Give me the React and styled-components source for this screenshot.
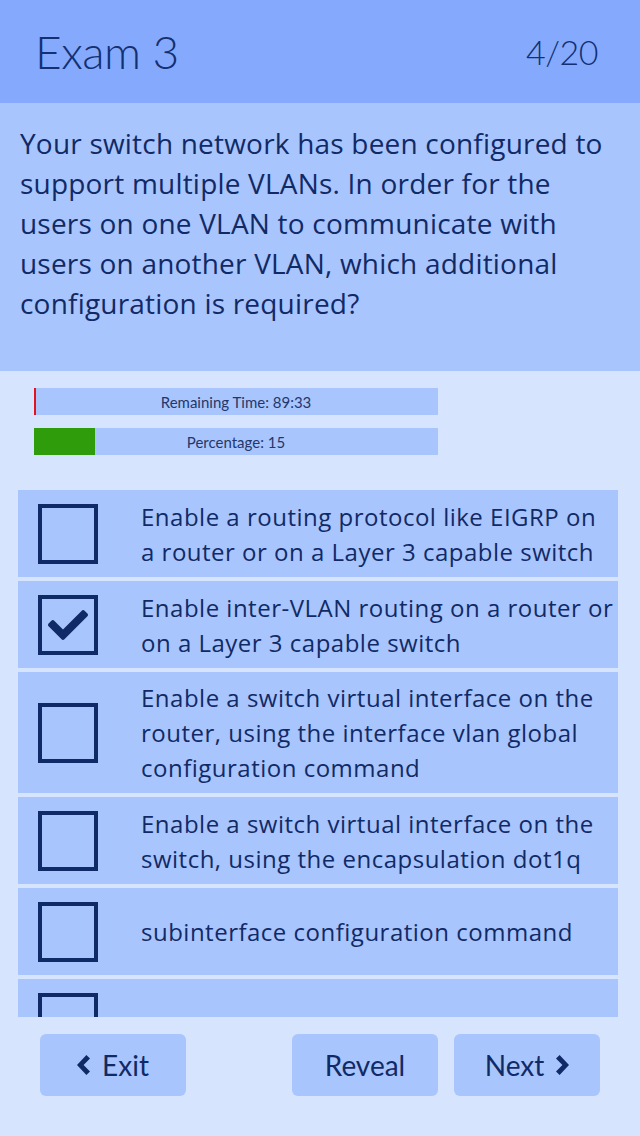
import React from "react"
import styled, { createGlobalStyle } from "styled-components"
import { FaCheck } from "react-icons/fa"

const GlobalStyle = createGlobalStyle`
  html, body {
    margin: 0;
    padding: 0;
    background: #d6e4fd;
  }
  body {
    font-family: "Lato", "Noto Sans", sans-serif;
    color: #112a66;
  }
`

const Screen = styled.div`
  width: 640px;
  height: 1136px;
  display: flex;
  flex-direction: column;
  background: #d6e4fd;
  overflow: hidden;
`

const Header = styled.header`
  height: 103px;
  background: #85aafd;
  display: flex;
  align-items: center;
  justify-content: space-between;
  padding: 0 42px 0 35px;
  box-sizing: border-box;
`

const Title = styled.h1`
  margin: 0;
  font-weight: 300;
  font-size: ${p => p.size}px;
  color: #133073;
  letter-spacing: -0.5px;
`

const Question = styled.section`
  height: 268px;
  background: #a9c5fd;
  padding: 20px 20px 0 20px;
  box-sizing: border-box;
  font-family: "Open Sans", "Noto Sans", sans-serif;
  font-size: 28px;
  line-height: 40px;
  color: #112a66;
  letter-spacing: 0.2px;
`

const Bars = styled.div`
  display: flex;
  flex-direction: column;
  gap: 13px;
  padding: 17px 0 0 34px;
`

const Bar = styled.div`
  position: relative;
  width: 404px;
  height: 27px;
  background: #a9c5fd;
  display: flex;
  align-items: center;
  justify-content: center;
  font-size: 15px;
  color: #23386a;
`

const Fill = styled.div`
  position: absolute;
  left: 0;
  top: 0;
  bottom: 0;
  background: ${p => p.color};
`

const BarLabel = styled.span`
  position: relative;
`

const OptionList = styled.div`
  margin: 35px 0 0 18px;
  width: 600px;
  height: 527px;
  overflow: hidden;
  display: flex;
  flex-direction: column;
  gap: 4px;
`

const Option = styled.div`
  flex-shrink: 0;
  min-height: 87px;
  background: #a9c5fd;
  display: flex;
  align-items: center;
  padding: 8px 4px 8px 20px;
  box-sizing: border-box;
`

const Box = styled.div`
  flex-shrink: 0;
  width: 60px;
  height: 60px;
  border: 4px solid #0f2a66;
  box-sizing: border-box;
  display: flex;
  align-items: center;
  justify-content: center;
  color: #0f2a66;
  font-size: 40px;
`

const OptionText = styled.div`
  margin-left: 43px;
  font-family: "Open Sans", "Noto Sans", sans-serif;
  font-size: 24px;
  line-height: 35px;
  color: #112a66;
  letter-spacing: 0.5px;
`

const Footer = styled.div`
  display: flex;
  align-items: center;
  padding: 17px 40px 0 40px;
  gap: 16px;
`

const Button = styled.button`
  width: 146px;
  height: 62px;
  border: none;
  border-radius: 6px;
  background: #a9c5fd;
  color: #112a66;
  font-family: inherit;
  font-size: 28px;
  display: flex;
  align-items: center;
  justify-content: center;
  gap: 12px;
  margin-left: ${p => (p.push ? "auto" : "0")};
`

const Chevron = ({ flip }) => (
  <svg width="13" height="20" viewBox="0 0 13 20" style={flip ? { transform: "scaleX(-1)" } : undefined}>
    <polygon points="13,3.6 9.4,0 0,10 9.4,20 13,16.4 6.6,10" fill="#0f2a66" />
  </svg>
)

const options = [
  { text: "Enable a routing protocol like EIGRP on a router or on a Layer 3 capable switch" },
  { text: "Enable inter-VLAN routing on a router or on a Layer 3 capable switch", checked: true },
  { text: "Enable a switch virtual interface on the router, using the interface vlan global configuration command" },
  { text: "Enable a switch virtual interface on the switch, using the encapsulation dot1q" },
  { text: "subinterface configuration command" },
  { text: "" }
]

function App() {
  const percent = 15
  return (
    <Screen>
      <GlobalStyle />
      <Header>
        <Title size={46}>Exam 3</Title>
        <Title size={34}>4/20</Title>
      </Header>
      <Question>
        Your switch network has been configured to support multiple VLANs. In order for the
        users on one VLAN to communicate with users on another VLAN, which additional
        configuration is required?
      </Question>
      <Bars>
        <Bar>
          <Fill color="#e0141e" style={{ width: 2 }} />
          <BarLabel>Remaining Time: 89:33</BarLabel>
        </Bar>
        <Bar>
          <Fill color="#2e9c0b" style={{ width: `${percent}%` }} />
          <BarLabel>Percentage: {percent}</BarLabel>
        </Bar>
      </Bars>
      <OptionList>
        {options.map((o, i) => (
          <Option key={i}>
            <Box>{o.checked ? <FaCheck /> : null}</Box>
            <OptionText>{o.text}</OptionText>
          </Option>
        ))}
      </OptionList>
      <Footer>
        <Button><Chevron />Exit</Button>
        <Button push>Reveal</Button>
        <Button>Next<Chevron flip /></Button>
      </Footer>
    </Screen>
  )
}

export default App
